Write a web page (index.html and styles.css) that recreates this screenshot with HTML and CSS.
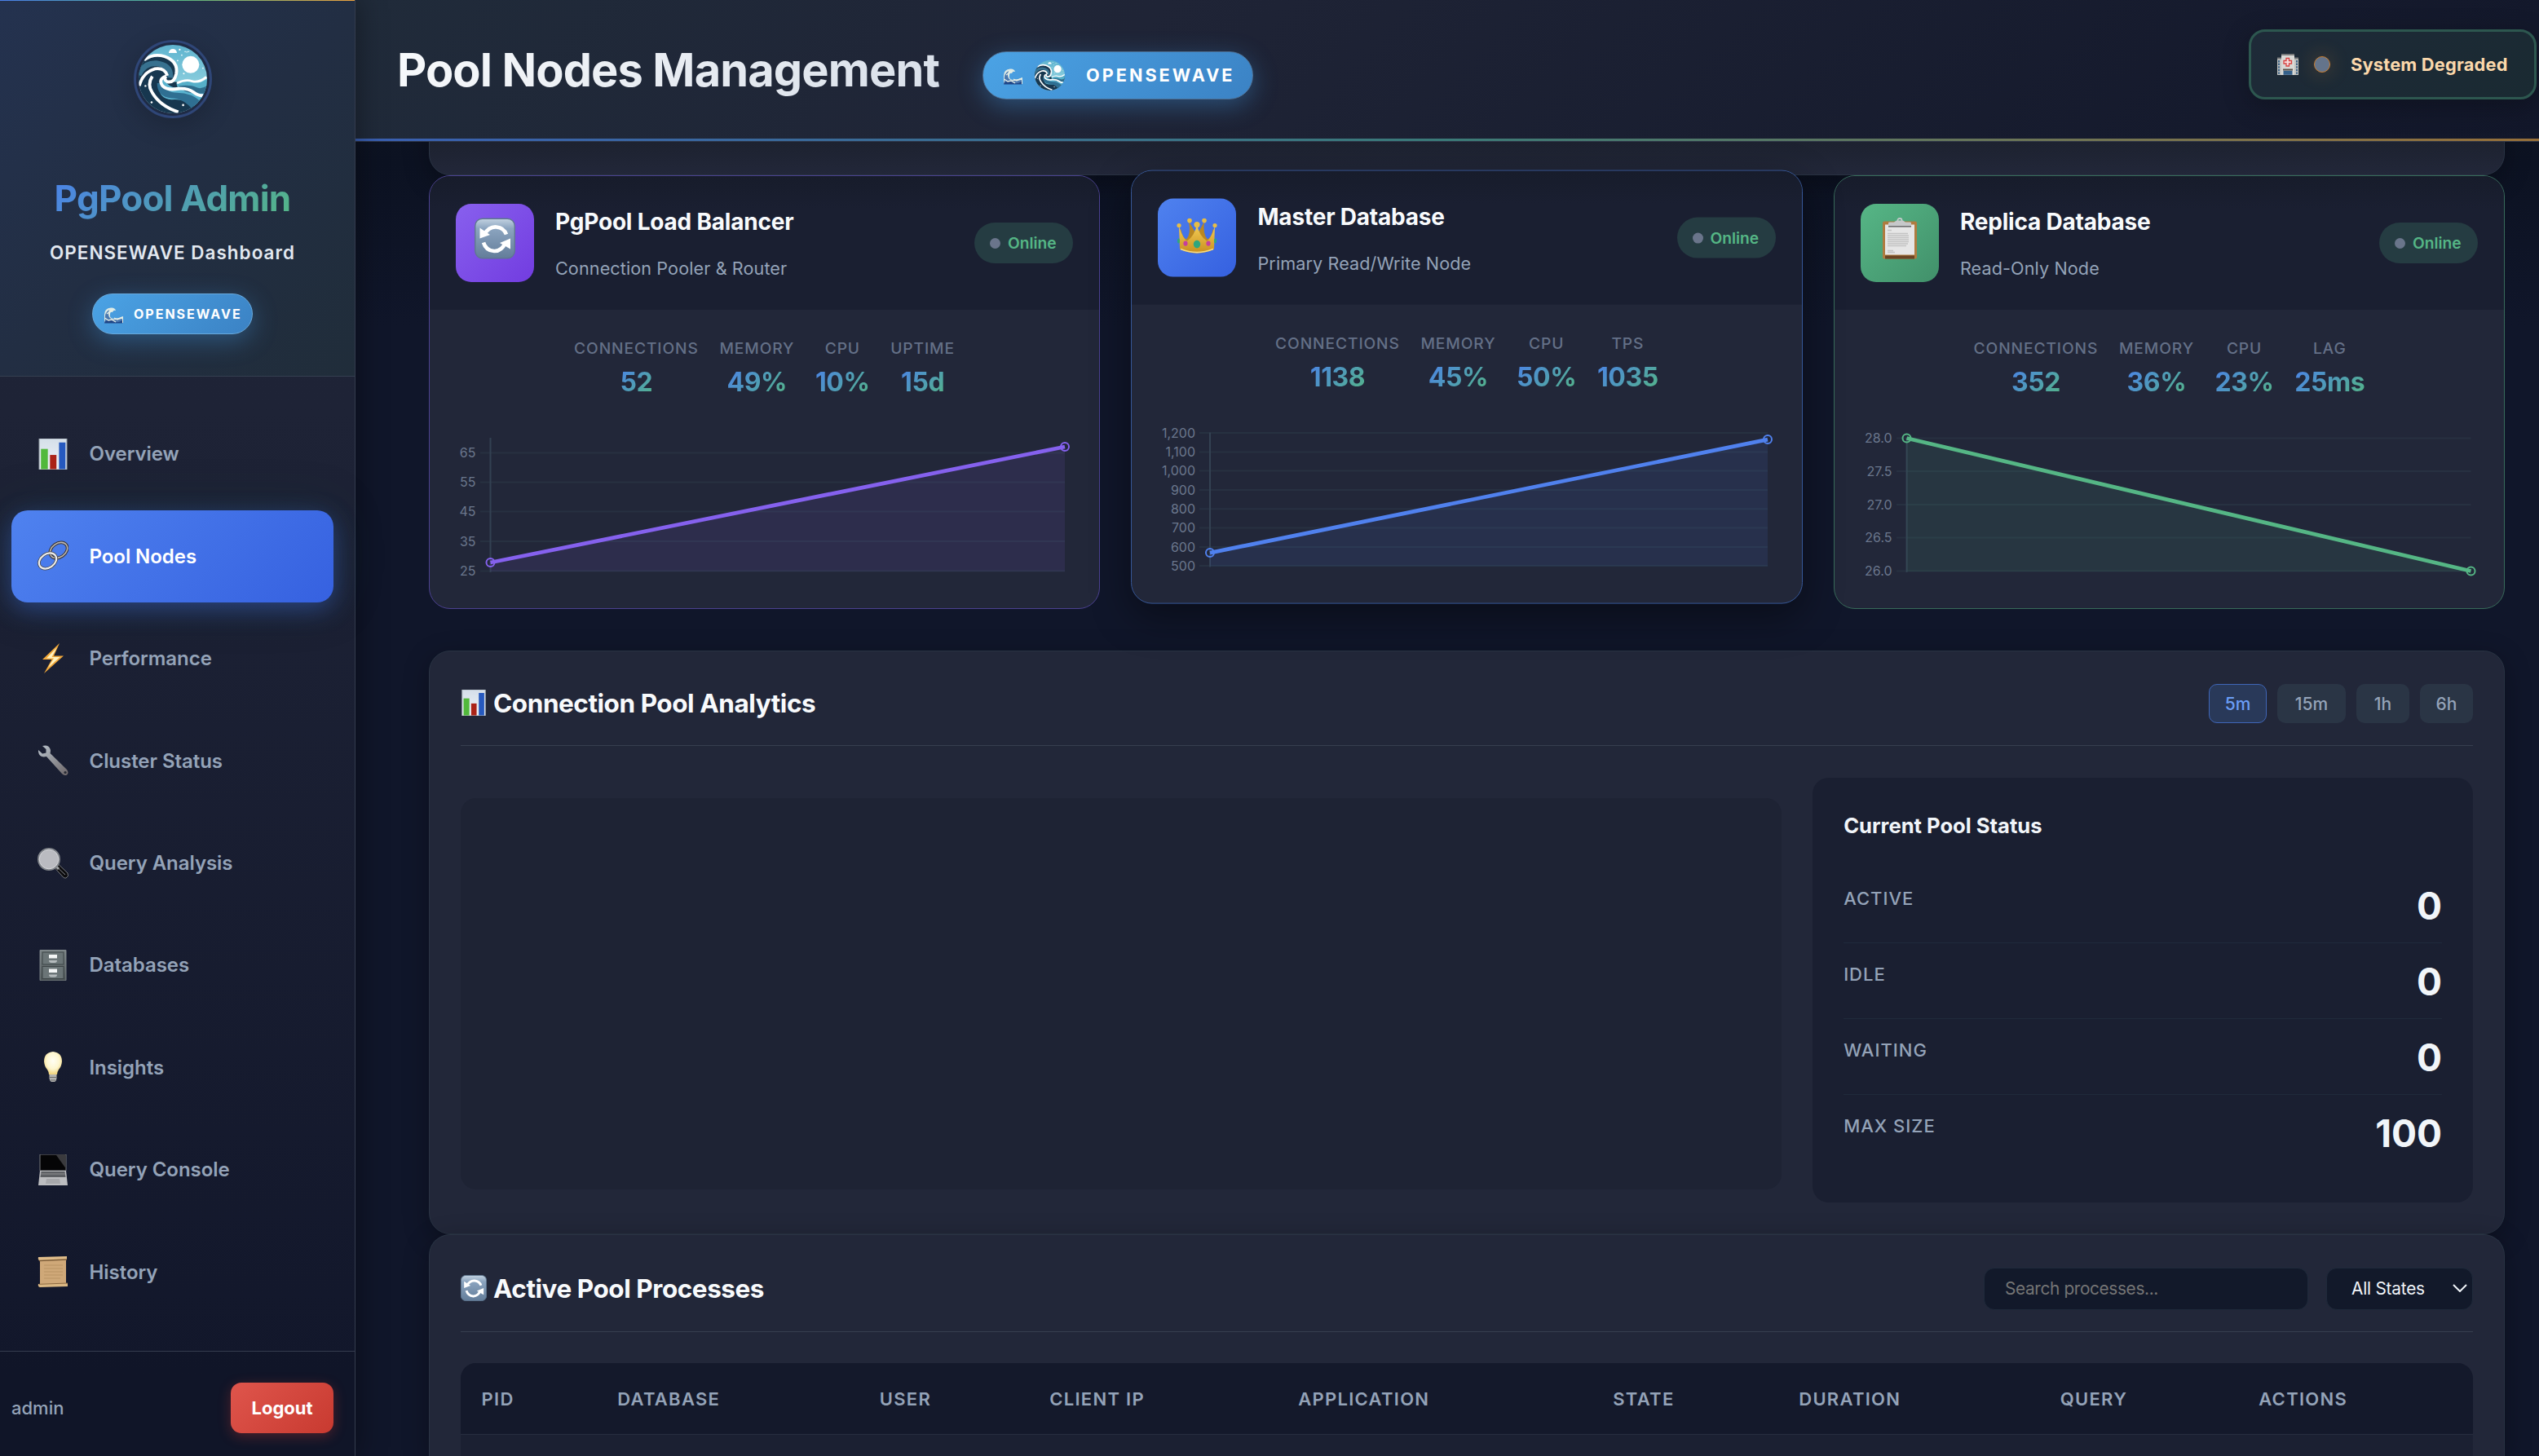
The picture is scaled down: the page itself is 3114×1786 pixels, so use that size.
FILE: index.html
```html
<!DOCTYPE html>
<html lang="en">
<head>
<meta charset="utf-8">
<title>Pool Nodes Management</title>
<link rel="stylesheet" href="styles.css">
</head>
<body>
<svg class="defs" width="0" height="0" aria-hidden="true">
  <defs>
    <linearGradient id="gSky" x1="0" y1="0" x2="0" y2="1"><stop offset="0" stop-color="#5fb4cf"/><stop offset="1" stop-color="#a9e0e8"/></linearGradient>
    <linearGradient id="gPaper" x1="0" y1="0" x2="0" y2="1"><stop offset="0" stop-color="#d5dfe9"/><stop offset="1" stop-color="#eef3f8"/></linearGradient>
    <linearGradient id="gRefresh" x1="0" y1="0" x2="0" y2="1"><stop offset="0" stop-color="#c3d3e2"/><stop offset=".25" stop-color="#8ba4bf"/><stop offset="1" stop-color="#637d9a"/></linearGradient>
    <linearGradient id="gSteel" x1="0" y1="0" x2="1" y2="1"><stop offset="0" stop-color="#b9c3cc"/><stop offset="1" stop-color="#6d6668"/></linearGradient>
    <linearGradient id="gGold" x1="0" y1="0" x2="0" y2="1"><stop offset="0" stop-color="#f4cf57"/><stop offset="1" stop-color="#c98f1e"/></linearGradient>
    <radialGradient id="gBulb" cx=".5" cy=".4" r=".6"><stop offset="0" stop-color="#fffef4"/><stop offset=".6" stop-color="#fdf6cf"/><stop offset="1" stop-color="#f0d27a"/></radialGradient>
    <linearGradient id="gCab" x1="0" y1="0" x2="0" y2="1"><stop offset="0" stop-color="#7b8486"/><stop offset="1" stop-color="#4c5456"/></linearGradient>
    <clipPath id="cLogo"><circle cx="50" cy="50" r="50"/></clipPath>
  </defs>
  <symbol id="logo" viewBox="0 0 100 100">
    <g clip-path="url(#cLogo)">
      <rect width="100" height="100" fill="url(#gSky)"/>
      <circle cx="76" cy="29" r="12.5" fill="#fff"/>
      <path d="M44 12a6 6 0 0 1 12 0z" fill="#fff"/>
      <circle cx="60" cy="7" r="1.3" fill="#fff"/><circle cx="63" cy="15" r="1" fill="#fff"/><circle cx="57" cy="23" r="1" fill="#fff"/><circle cx="66" cy="42" r="1.2" fill="#fff"/><circle cx="94" cy="34" r="1" fill="#fff"/>
      <path d="M67 10q2-1 3 1 2-2 4-1" stroke="#fff" stroke-width="1" fill="none"/>
      <path d="M-2 30Q14 14 32 16Q54 20 56 38Q56 52 48 54Q62 54 70 56Q86 62 102 50V102H-2z" fill="#17374f"/>
      <path d="M55 56Q70 50 80 54T102 48V80L60 72z" fill="#56afc9"/>
      <path d="M58 60Q76 58 84 62T102 58V72L70 70z" fill="#2f6c8c"/>
      <path d="M0 44Q8 26 26 27Q48 30 46 48" fill="none" stroke="#37718f" stroke-width="8"/>
      <path d="M30 58Q28 78 48 80Q70 78 84 92L104 70Q74 74 60 64Q40 62 38 48z" fill="#5ab3cf"/>
      <path d="M27 56Q27 76 48 78Q66 78 80 96L92 84Q78 70 56 70Q40 70 34 56z" fill="#2f6f92"/>
      <path d="M8 22Q22 12 38 17Q58 24 55 42Q52 56 42 54Q36 51 40 46" fill="none" stroke="#fff" stroke-width="4.6"/>
      <path d="M1 60Q6 40 24 35Q38 33 42 45" fill="none" stroke="#fff" stroke-width="4.4"/>
      <path d="M40 46Q28 50 35 60Q42 67 58 64Q72 63 80 69T95 74" fill="none" stroke="#fff" stroke-width="4.6"/>
      <path d="M56 56Q68 50 78 53T99 47" fill="none" stroke="#fff" stroke-width="3.4"/>
      <path d="M20 46Q12 58 20 70Q32 90 58 98" fill="none" stroke="#fff" stroke-width="4.6"/>
      <circle cx="10" cy="60" r="1.4" fill="#fff"/><circle cx="19" cy="84" r="1.5" fill="#fff"/><circle cx="65" cy="88" r="1.6" fill="#fff"/>
    </g>
  </symbol>
  <symbol id="wave" viewBox="0 0 24 20">
    <path d="M1 19V9Q1 1 9 .5Q14 0 15 4Q12 3 11 6Q8 5 8 9Q7 13 12 14Q18 14 24 11V19z" fill="#dfeae4"/>
    <path d="M2 15Q1 6 7 3Q5 8 7 12Q10 17 23 14V19H1z" fill="#4a78b0"/>
    <path d="M2 17Q8 14 12 17T23 16V19.500H1z" fill="#1f4586"/>
    <path d="M1.500 13L6 16L10 15L15 18M13 13L17 15L23 12M4 8L8 5L11 3" stroke="#e6efe6" stroke-width="1.300" fill="none"/>
  </symbol>
  <symbol id="bars" viewBox="0 0 36 36">
    <rect x="2" y="0" width="32" height="36" fill="url(#gPaper)" stroke="#aab3bb" stroke-width="1"/>
    <rect x="4" y="12" width="8" height="23.500" fill="#52b93c"/><rect x="14.500" y="19" width="7.500" height="16.500" fill="#ab2318"/><rect x="25" y="4.500" width="7.500" height="31" fill="#2659bf"/>
  </symbol>
  <symbol id="link" viewBox="0 0 38 38">
    <g fill="none"><ellipse cx="26" cy="12" rx="11.500" ry="8.500" transform="rotate(-35 26 12)" stroke="#3a3432" stroke-width="3.800"/><ellipse cx="26" cy="12" rx="11.500" ry="8.500" transform="rotate(-35 26 12)" stroke="#bdb9b6" stroke-width="1.600"/>
    <ellipse cx="12.500" cy="25" rx="11.500" ry="8.500" transform="rotate(-35 12.500 25)" stroke="#4a4a4e" stroke-width="3.800"/><ellipse cx="12.500" cy="25" rx="11.500" ry="8.500" transform="rotate(-35 12.500 25)" stroke="#eeeeee" stroke-width="2.200"/></g>
  </symbol>
  <symbol id="bolt" viewBox="0 0 38 38">
    <path d="M27 0L6 20H17.500L8 37L32 15.500H20z" fill="#f3a93a"/><path d="M24 5L11 18.500H20L13 30L27.500 17H17.500z" fill="#fff3c0"/>
  </symbol>
  <symbol id="wrench" viewBox="0 0 38 38">
    <path d="M6 1Q14-1 16 6Q16 9 15.500 10L36 30Q39 34 36 36.500Q33 38 30 35L11 14Q2 16 1 8V6L6 10.500L10.500 9.500L10.500 5z" fill="url(#gSteel)"/><circle cx="34" cy="33.500" r="1.600" fill="#262a33"/>
  </symbol>
  <symbol id="glass" viewBox="0 0 38 38">
    <path d="M21.500 25L26 20.500L37 31Q39 35 35 37Q33 37.500 31.500 36z" fill="#0c0c0e" stroke="#77797e" stroke-width="1"/><path d="M26 25.500L34 33" stroke="#85878c" stroke-width="1"/><path d="M22 22L26 26" stroke="#a0a2a5" stroke-width="3"/>
    <circle cx="14" cy="14" r="12.800" fill="#babbc1" stroke="#7e8288" stroke-width="2.400"/><circle cx="14" cy="14" r="11.800" fill="none" stroke="#e8e8ec" stroke-width=".8"/>
  </symbol>
  <symbol id="cabinet" viewBox="0 0 36 38">
    <rect x="2" y="0" width="32" height="38" rx="1" fill="url(#gCab)" stroke="#8d9698" stroke-width=".8"/>
    <g fill="#6b7577" stroke="#3d4446" stroke-width="1"><rect x="5" y="3" width="26" height="15"/><rect x="5" y="20.500" width="26" height="15"/></g>
    <g fill="#f3f5f5"><rect x="13" y="6" width="10" height="4.500"/><rect x="13" y="23.500" width="10" height="4.500"/></g>
    <path d="M13 13q0 3 3 3h4q3 0 3-3zM13 30.500q0 3 3 3h4q3 0 3-3z" fill="#b5bbbd"/>
  </symbol>
  <symbol id="bulb" viewBox="0 0 38 38">
    <path d="M19 0Q30 1 30 12Q29.500 18 26 22Q24 25 24 28H14Q14 25 12 22Q8.500 18 8 12Q8 1 19 0z" fill="url(#gBulb)"/>
    <path d="M14.500 28H23.500V33Q23 36 21 37H17Q15 36 14.500 33z" fill="#b3b3b1"/><path d="M15 31.500H23M16 35H22" stroke="#6c6c6a" stroke-width="1.200"/>
  </symbol>
  <symbol id="laptop" viewBox="0 0 38 38">
    <path d="M3 0H35V20H3z" fill="#050506" stroke="#77797c" stroke-width="1"/><path d="M23 1H34.500V17z" fill="#3a3a3d"/>
    <path d="M3 20H35L37 38H1z" fill="#bcbdc0"/><path d="M4.500 21H33.500L34.500 28H3.500z" fill="#5d5f63"/><path d="M4 24H34" stroke="#9c9da0" stroke-width=".8"/><path d="M11 30H27L28 36H10z" fill="#a7a8ab"/>
  </symbol>
  <symbol id="scroll" viewBox="0 0 38 38">
    <path d="M3 4H35V34H3z" fill="#cfa878"/><path d="M1 1L36 0V4L2 5.500Q0 3 1 1z" fill="#e0bd8a"/><path d="M2 5.500L36 4" stroke="#7c5c38" stroke-width="1.300"/>
    <path d="M1 34L37 33V37L3 38Q0 37 1 34z" fill="#dbb883"/><path d="M2 34.300L37 33" stroke="#8d6a41" stroke-width="1"/>
    <path d="M8 11H31M8 15H31M8 19H31M8 23H31M8 27H28" stroke="#b99465" stroke-width="1"/>
  </symbol>
  <symbol id="hospital" viewBox="0 0 26 26">
    <rect x="0" y="5" width="26" height="21" fill="#c3c4c1"/><rect x="5" y="0" width="16" height="26" fill="#d8d8d5"/><path d="M5 1H21M0 5.500H5M21 5.500H26" stroke="#77797a" stroke-width="1.800"/>
    <path d="M2 8V25M24 8V25" stroke="#3f6488" stroke-width="2" stroke-dasharray="2.400 1.200"/><rect x="7" y="18.500" width="12" height="2" fill="#5b5148"/><path d="M7.500 23.300H18.500" stroke="#34608a" stroke-width="5"/>
    <path d="M11 5.500H14.500V8.500H17.500V12H14.500V15H11V12H8V8.500H11z" fill="#f6dede" stroke="#d8413f" stroke-width="1.300"/>
  </symbol>
  <symbol id="refresh" viewBox="0 0 50 50">
    <rect x=".7" y=".7" width="48.600" height="48.600" rx="9" fill="url(#gRefresh)" stroke="#5f7890" stroke-width="1.400"/>
    <g fill="none" stroke="#fff" stroke-width="4.600"><path d="M12 20Q18 10 27 11Q36 12 39 20"/><path d="M38 30Q33 41 24 40.500Q14 40 11 30"/></g>
    <path d="M6.500 25V12L19 20.500zM44 25V38L31 30.500z" fill="#fff"/>
  </symbol>
  <symbol id="crown" viewBox="0 0 50 44">
    <path d="M5 12Q7 24 12 26Q18 20 15 4Q22 16 25 20Q28 16 34 4Q32 20 38 26Q43 24 45 12L46 34H4z" fill="#b98722"/>
    <path d="M3 10Q8 26 13 28Q22 22 25 8Q28 22 37 28Q42 26 47 10L46 38Q36 43 25 43Q14 43 4 38z" fill="url(#gGold)"/>
    <g fill="#e8bd45"><circle cx="3" cy="9" r="2.600"/><circle cx="16" cy="3" r="2.800"/><circle cx="34" cy="3" r="2.800"/><circle cx="47" cy="9" r="2.600"/><circle cx="25" cy="8" r="3.600"/></g>
    <ellipse cx="25" cy="32" rx="4.200" ry="4.800" fill="#2fa67e"/><ellipse cx="11" cy="31" rx="2.600" ry="3.200" fill="#c53f9d"/><ellipse cx="39" cy="31" rx="2.600" ry="3.200" fill="#c53f9d"/><ellipse cx="2.500" cy="28" rx="1.500" ry="3" fill="#2fa67e"/><ellipse cx="47.500" cy="28" rx="1.500" ry="3" fill="#2fa67e"/>
    <path d="M5 38Q25 46 45 38" stroke="#f7dc84" stroke-width="1.600" fill="none"/>
  </symbol>
  <symbol id="clipboard" viewBox="0 0 44 50">
    <rect x="1" y="4" width="42" height="46" rx="2" fill="#ae7c40"/><path d="M4 46H40V50H4z" fill="#6b4424"/><rect x="4" y="8" width="36" height="37" fill="#e6e6e6"/>
    <path d="M7 15H12M7 19H32M7 21.500H33M7 24H33M7 26.500H33M7 29H33M7 31.500H32M7 34H30M7 40H14M7 42H16" stroke="#c4c4c4" stroke-width="1.300"/>
    <circle cx="22" cy="3" r="2.600" fill="none" stroke="#c7cacc" stroke-width="1.700"/><path d="M8 6Q8 5 10 5H15L18 3H26L29 5H34Q36 5 36 6V10H8z" fill="#c6c8ca"/><path d="M8 10.300H36" stroke="#6e6f71" stroke-width="1.600"/>
  </symbol>
</svg>

<div class="app">
  <aside class="sidebar">
    <div class="brand">
      <div class="brand-logo"><svg><use href="#logo"/></svg></div>
      <h1 class="brand-title"><span>PgPool Admin</span></h1>
      <p class="brand-sub">OPENSEWAVE Dashboard</p>
      <div class="badge badge-sm"><svg class="ic-wave"><use href="#wave"/></svg><span>OPENSEWAVE</span></div>
    </div>
    <nav class="nav">
      <a class="nav-item"><svg><use href="#bars"/></svg><span>Overview</span></a>
      <a class="nav-item active"><svg><use href="#link"/></svg><span>Pool Nodes</span></a>
      <a class="nav-item"><svg><use href="#bolt"/></svg><span>Performance</span></a>
      <a class="nav-item"><svg><use href="#wrench"/></svg><span>Cluster Status</span></a>
      <a class="nav-item"><svg><use href="#glass"/></svg><span>Query Analysis</span></a>
      <a class="nav-item"><svg><use href="#cabinet"/></svg><span>Databases</span></a>
      <a class="nav-item"><svg><use href="#bulb"/></svg><span>Insights</span></a>
      <a class="nav-item"><svg><use href="#laptop"/></svg><span>Query Console</span></a>
      <a class="nav-item"><svg><use href="#scroll"/></svg><span>History</span></a>
    </nav>
    <div class="side-foot"><span class="user">admin</span><button class="logout">Logout</button></div>
  </aside>

  <div class="main">
    <header class="topbar">
      <h2 class="page-title"><span>Pool Nodes Management</span></h2>
      <div class="badge badge-lg"><svg class="ic-wave"><use href="#wave"/></svg><svg class="ic-logo"><use href="#logo"/></svg><span>OPENSEWAVE</span></div>
      <div class="health"><svg><use href="#hospital"/></svg><i class="health-dot"></i><span>System Degraded</span></div>
    </header>

    <div class="content">
      <section class="panel panel-prev"></section>

      <section class="nodes">
        <article class="node node-purple">
          <div class="node-head">
            <div class="node-icon"><svg width="50" height="51"><use href="#refresh"/></svg></div>
            <div class="node-text"><h3>PgPool Load Balancer</h3><p>Connection Pooler &amp; Router</p></div>
            <div class="online"><i></i><span>Online</span></div>
          </div>
          <div class="metrics">
            <div><label>CONNECTIONS</label><b>52</b></div><div><label>MEMORY</label><b>49%</b></div><div><label>CPU</label><b>10%</b></div><div><label>UPTIME</label><b>15d</b></div>
          </div>
          <svg class="chart" viewBox="0 0 757 192">
            <path class="grid" d="M30 32.500H747M30 68.500H747M30 104.500H747M30 141H747M30 177.500H747"/>
            <path class="axis" d="M42.500 14V179"/>
            <path class="area" d="M42.500 167L747 25V178H42.500z"/><path class="line" d="M42.500 167L747 25"/>
            <circle class="pt" cx="42.500" cy="167" r="5"/><circle class="pt" cx="747" cy="25" r="5"/>
            <g class="tick"><text x="24.500" y="38">65</text><text x="24.500" y="74">55</text><text x="24.500" y="110">45</text><text x="24.500" y="146.500">35</text><text x="24.500" y="183">25</text></g>
          </svg>
        </article>
        <article class="node node-blue">
          <div class="node-head">
            <div class="node-icon"><svg width="50" height="44"><use href="#crown"/></svg></div>
            <div class="node-text"><h3>Master Database</h3><p>Primary Read/Write Node</p></div>
            <div class="online"><i></i><span>Online</span></div>
          </div>
          <div class="metrics">
            <div><label>CONNECTIONS</label><b>1138</b></div><div><label>MEMORY</label><b>45%</b></div><div><label>CPU</label><b>50%</b></div><div><label>TPS</label><b>1035</b></div>
          </div>
          <svg class="chart" viewBox="0 0 757 192">
            <path class="grid" d="M51 14.500H748M51 37.800H748M51 61H748M51 84.400H748M51 107.700H748M51 131H748M51 154.300H748M51 177.500H748"/>
            <path class="axis" d="M64 14V179"/>
            <path class="area" d="M64 161.500L748 22.500V178H64z"/><path class="line" d="M64 161.500L748 22.500"/>
            <circle class="pt" cx="64" cy="161.500" r="5"/><circle class="pt" cx="748" cy="22.500" r="5"/>
            <g class="tick"><text x="46" y="20">1,200</text><text x="46" y="43.300">1,100</text><text x="46" y="66.500">1,000</text><text x="46" y="90">900</text><text x="46" y="113.300">800</text><text x="46" y="136.500">700</text><text x="46" y="160">600</text><text x="46" y="183">500</text></g>
          </svg>
        </article>
        <article class="node node-green">
          <div class="node-head">
            <div class="node-icon"><svg width="44" height="51"><use href="#clipboard"/></svg></div>
            <div class="node-text"><h3>Replica Database</h3><p>Read-Only Node</p></div>
            <div class="online"><i></i><span>Online</span></div>
          </div>
          <div class="metrics">
            <div><label>CONNECTIONS</label><b>352</b></div><div><label>MEMORY</label><b>36%</b></div><div><label>CPU</label><b>23%</b></div><div><label>LAG</label><b>25ms</b></div>
          </div>
          <svg class="chart" viewBox="0 0 757 192">
            <path class="grid" d="M44 14.500H748.500M44 55H748.500M44 96H748.500M44 136.500H748.500M44 177.500H748.500"/>
            <path class="axis" d="M56.500 14V179"/>
            <path class="area" d="M56.500 14.500L748.500 177.500V178H56.500z"/><path class="line" d="M56.500 14.500L748.500 177.500"/>
            <circle class="pt" cx="56.500" cy="14.500" r="5"/><circle class="pt" cx="748.500" cy="177.500" r="5"/>
            <g class="tick"><text x="38.500" y="20">28.0</text><text x="38.500" y="60.500">27.5</text><text x="38.500" y="101.500">27.0</text><text x="38.500" y="142">26.5</text><text x="38.500" y="183">26.0</text></g>
          </svg>
        </article>
      </section>

      <section class="panel panel-analytics">
        <div class="panel-head">
          <h3><svg><use href="#bars"/></svg><span>Connection Pool Analytics</span></h3>
          <div class="ranges"><button class="on">5m</button><button class="wide">15m</button><button>1h</button><button>6h</button></div>
        </div>
        <div class="analytics">
          <div class="pool-chart"></div>
          <div class="status">
            <h4>Current Pool Status</h4>
            <div class="row"><span>ACTIVE</span><b>0</b></div>
            <div class="row"><span>IDLE</span><b>0</b></div>
            <div class="row"><span>WAITING</span><b>0</b></div>
            <div class="row"><span>MAX SIZE</span><b>100</b></div>
          </div>
        </div>
      </section>

      <section class="panel panel-proc">
        <div class="panel-head">
          <h3><svg><use href="#refresh"/></svg><span>Active Pool Processes</span></h3>
          <div class="filters">
            <div class="search"><span>Search processes...</span></div>
            <div class="select"><span>All States</span><svg viewBox="0 0 18 10"><path d="M1 1L9 9L17 1"/></svg></div>
          </div>
        </div>
        <div class="table">
          <div class="thead"><span>PID</span><span>DATABASE</span><span>USER</span><span>CLIENT IP</span><span>APPLICATION</span><span>STATE</span><span>DURATION</span><span>QUERY</span><span>ACTIONS</span></div>
        </div>
      </section>
    </div>
  </div>
</div>
</body>
</html>
```
FILE: styles.css
```css
* { box-sizing: border-box; margin: 0; padding: 0; }
body { width: 3114px; height: 1786px; overflow: hidden; position: relative; background: #0f1528; color: #f1f5f9; font-family: "Inter", sans-serif; }
button { font: inherit; border: 0; }
svg { display: block; flex: none; }
.defs { position: absolute; }
.app { display: flex; height: 1786px; overflow: hidden; }

/* sidebar */
.sidebar { width: 436px; flex: none; height: 1786px; display: flex; flex-direction: column; border-right: 1px solid #343c4e; background: linear-gradient(180deg, #202538 0, #1e2336 28%, #11162a 100%); box-shadow: 4px 0 32px rgba(0,0,0,.35); position: relative; z-index: 3; }
.brand { height: 462px; flex: none; border-bottom: 1px solid #343f50; padding: 49px 12px 0 0; display: flex; flex-direction: column; align-items: center; background: linear-gradient(90deg, #4a80ec, #54b684 50%, #eda23f) top / 100% 1px no-repeat, linear-gradient(135deg, #24324f 0, #222e43 50%, #202d3a 100%); }
.brand-logo { width: 96px; height: 96px; flex: none; border-radius: 50%; border: 3px solid #2f4677; padding: 3px; background: #1f2b45; box-shadow: 0 8px 32px rgba(0,0,0,.2); }
.brand-logo svg { width: 84px; height: 84px; }
.brand-title { margin-top: 68px; height: 60px; font-size: 44px; line-height: 60px; font-weight: 700; letter-spacing: -.8px; }
.brand-title span { display: inline-block; background: linear-gradient(135deg, #4b82ea, #54b684); -webkit-background-clip: text; background-clip: text; color: transparent; }
.brand-sub { margin-top: 22px; font-size: 22.4px; line-height: 30px; font-weight: 600; letter-spacing: 1.050px; color: #e2e8f0; }
.badge { display: flex; align-items: center; color: #fff; font-weight: 700; background: linear-gradient(135deg, #4ba3e5, #3b82c4); border: 1px solid #68a9dc; flex: none; }
.badge-sm { margin-top: 35px; width: 197px; height: 50px; border-radius: 25px; padding-left: 13px; font-size: 16px; letter-spacing: 2px; box-shadow: 0 8px 30px rgba(66,153,225,.38); }
.badge-sm .ic-wave { width: 24px; height: 20px; margin: 3px 13px 0 0; }
.nav { padding: 38.300px 26px 0 14px; display: flex; flex-direction: column; gap: 12px; flex: 1; min-height: 0; }
.nav-item { height: 113.400px; border-radius: 20px; display: flex; align-items: center; padding-left: 32px; gap: 25.500px; font-size: 24px; font-weight: 600; letter-spacing: -.05px; color: #94a3b8; flex: none; }
.nav-item svg { width: 38px; height: 38px; }
.nav-item.active { color: #fff; background: linear-gradient(135deg, #4f82ef, #3661e0); box-shadow: 0 8px 30px rgba(66,115,235,.42), 0 0 60px rgba(20,60,50,.3); }
.side-foot { height: 129px; flex: none; border-top: 1px solid #343c4e; background: rgba(15,20,38,.45); padding: 38px 26px 0 14px; display: flex; justify-content: space-between; }
.user { font-size: 22px; line-height: 62px; font-weight: 500; color: #94a3b8; }
.logout { width: 126px; height: 62px; border-radius: 13px; font-size: 22px; font-weight: 650; color: #fff; background: linear-gradient(135deg, #df554c, #c83a30); box-shadow: 0 4px 16px rgba(220,60,50,.3); }

/* header */
.main { flex: 1; min-width: 0; height: 1786px; display: flex; flex-direction: column; background: linear-gradient(180deg, #0d1322 170px, #0c1222 200px, #10162a 400px, #10162a 100%); }
.topbar { height: 174px; flex: none; display: flex; align-items: flex-start; padding: 0 3px 0 51px; position: relative; z-index: 2; border-bottom: 1px solid #2d3446;
  background: linear-gradient(90deg, #3a5fb2, #3b7a78 50%, #97703a) bottom / 100% 3px no-repeat, linear-gradient(135deg, #202b3a 0, #1f2436 35%, #12172a 100%); }
.page-title { margin-top: 45px; font-size: 56px; line-height: 82px; height: 82px; font-weight: 700; letter-spacing: -.9px; white-space: nowrap; }
.page-title span { display: inline-block; background: linear-gradient(135deg, #f8fafc, #d8dfe9); -webkit-background-clip: text; background-clip: text; color: transparent; }
.badge-lg { margin: 63px 0 0 53px; width: 332px; height: 59px; border-radius: 29px; border-color: #4d6f93; padding-left: 24px; font-size: 21.600px; letter-spacing: 3.050px; box-shadow: 0 8px 30px rgba(66,153,225,.38); }
.badge-lg span { padding-bottom: 1px; }
.badge-lg .ic-wave { width: 24px; height: 20px; margin: 3px 15px 0 0; }
.badge-lg .ic-logo { width: 37px; height: 37px; margin-right: 26px; }
.health { margin: 36px 0 0 auto; width: 353px; height: 86px; border: 3px solid #2d574f; border-radius: 20px; background: linear-gradient(135deg, #1e2a38, #1a2a32); display: flex; align-items: center; padding-left: 32px; font-size: 21.800px; font-weight: 650; letter-spacing: .2px; color: #fbd8ab; box-shadow: 0 8px 32px rgba(0,0,0,.25); white-space: nowrap; }
.health svg { width: 26px; height: 26px; margin-right: 19px; }
.health-dot { width: 20px; height: 20px; border-radius: 50%; background: #64748b; border: 1px solid #c87d2f; box-shadow: 0 0 24px rgba(237,150,50,.3); margin-right: 25px; }

/* content */
.content { padding: 0 42px 0 90px; flex: 1; min-height: 0; display: flex; flex-direction: column; }
.panel { background: #222739; border: 1px solid #293343; border-radius: 26px; padding: 0 38px; box-shadow: 0 8px 32px rgba(0,0,0,.3); flex: none; }
.panel-prev { height: 141px; margin-top: -100px; background: linear-gradient(180deg, #1d2230 100px, #222739); }
.nodes { display: grid; grid-template-columns: repeat(3, 1fr); gap: 38.400px; }
.node { height: 532px; border-radius: 26px; border: 1px solid #4b4190; background: #222739; overflow: hidden; padding-bottom: 32px; display: flex; flex-direction: column; --c: #8561ee; }
.node-purple { --i1: #8860ee; --i2: #723ce0; }
.node-blue { transform: translateY(-6.400px); border-color: #365797; --c: #5081ee; --i1: #4f82ef; --i2: #3560e0; box-shadow: 0 16px 48px rgba(0,0,0,.4); }
.node-green { border-color: #386b5a; --c: #55b685; --i1: #56b686; --i2: #41906a; }
.node-head { height: 164px; background: linear-gradient(180deg, #171c2b 0, #1a1f31 40px); padding: 34px 32px 0; display: flex; flex: none; }
.node-icon { width: 96px; height: 96px; border-radius: 19px; background: linear-gradient(135deg, var(--i1), var(--i2)); display: flex; align-items: center; justify-content: center; padding-bottom: 12px; flex: none; }
.node-blue .node-icon { padding-bottom: 4px; }
.node-text { margin-left: 26px; flex: 1; }
.node-text h3 { margin-top: 2px; font-size: 28px; line-height: 40px; font-weight: 650; letter-spacing: -.2px; color: #f8fafc; }
.node-text p { margin-top: 22px; font-size: 21.600px; line-height: 30px; letter-spacing: .1px; color: #94a3b8; }
.online { margin-top: 23px; width: 121px; height: 50px; border-radius: 25px; background: #253c42; display: flex; align-items: center; padding-left: 19px; gap: 9px; font-size: 19.200px; font-weight: 600; color: #55b685; }
.online i { width: 13px; height: 13px; border-radius: 50%; background: #6a758b; }
.metrics { height: 142.500px; flex: none; padding-top: 36px; display: flex; justify-content: center; gap: 25.600px; }
.metrics div { display: flex; flex-direction: column; align-items: center; }
.metrics label { font-size: 19.200px; line-height: 22px; font-weight: 500; letter-spacing: .9px; color: #647087; }
.metrics b { margin-top: 9.500px; font-size: 32px; line-height: 42px; font-weight: 700; letter-spacing: -.4px; background: linear-gradient(135deg, #4b82ea, #54b684); -webkit-background-clip: text; background-clip: text; color: transparent; }
.chart { width: 757px; height: 192px; margin: 0 auto; flex: none; }
.grid { stroke: #273141; stroke-width: 2; }
.axis { stroke: #334152; stroke-width: 2; }
.area { fill: var(--c); fill-opacity: .11; }
.line { stroke: var(--c); stroke-width: 4.800; }
.pt { fill: none; stroke: var(--c); stroke-width: 2; }
.tick { fill: #6b778d; font-size: 16px; text-anchor: end; }

.panel-analytics { margin-top: 51px; height: 716px; }
.panel-head { height: 116px; border-bottom: 1px solid #373e4f; display: flex; justify-content: space-between; }
.panel-head h3 { height: 126px; display: flex; align-items: center; gap: 8px; font-size: 31.500px; font-weight: 650; letter-spacing: -.45px; color: #f8fafc; }
.panel-head h3 svg { width: 32px; height: 32px; }
.ranges { display: flex; gap: 13px; margin-top: 40px; }
.ranges button { width: 65px; height: 48px; border-radius: 10px; background: #2a3545; color: #94a3b8; font-size: 21px; font-weight: 500; }
.ranges .on { width: 71px; background: #293959; color: #6b9df5; border: 1px solid #3f66b8; }
.ranges .wide { width: 84px; }
.analytics { display: grid; grid-template-columns: 2fr 1fr; gap: 38.400px; padding-top: 39px; }
.pool-chart { margin-top: 25px; height: 480px; border-radius: 19px; background: #1e2334; }
.status { height: 521px; border-radius: 20px; background: #1a1f31; padding: 39.500px 38px 0 38px; }
.status h4 { font-size: 25.600px; line-height: 38px; font-weight: 650; margin-bottom: 32px; }
.row { height: 93.200px; border-bottom: 1px solid #1f2a3b; display: flex; justify-content: space-between; }
.row:last-child { border: 0; }
.row span { font-size: 22px; line-height: 30px; margin-top: 23px; font-weight: 500; letter-spacing: 1px; color: #94a3b8; }
.row b { font-size: 46px; line-height: 54px; margin-top: 20px; font-weight: 700; }

.panel-proc { height: 272px; border-bottom: 0; border-radius: 26px 26px 0 0; }
.panel-proc .panel-head { height: 119px; }
.panel-proc .panel-head h3 { height: 130px; }
.filters { display: flex; gap: 22px; margin-top: 40px; font-size: 20.800px; }
.search, .select { height: 52px; border-radius: 13px; background: #12192a; border: 1px solid #1f2a3b; display: flex; align-items: center; padding-bottom: 2px; }
.search { width: 398px; padding-left: 25px; color: #757575; letter-spacing: -.35px; }
.select { width: 180px; padding-left: 30px; color: #f1f5f9; letter-spacing: -.2px; }
.select svg { width: 18px; height: 10px; margin-left: 34px; fill: none; stroke: #f1f5f9; stroke-width: 2; }
.table { margin-top: 38px; height: 114px; border-radius: 19px 19px 0 0; overflow: hidden; background: #1b2032; }
.thead { height: 88px; background: #14192b; border-bottom: 1px solid #272e3f; padding-left: 25.600px; display: grid; grid-template-columns: 166.600px 321.500px 208.500px 305px 386px 228px 320.500px 243.500px 1fr; align-items: center; font-size: 22px; font-weight: 600; letter-spacing: 1.300px; color: #94a3b8; }
```
